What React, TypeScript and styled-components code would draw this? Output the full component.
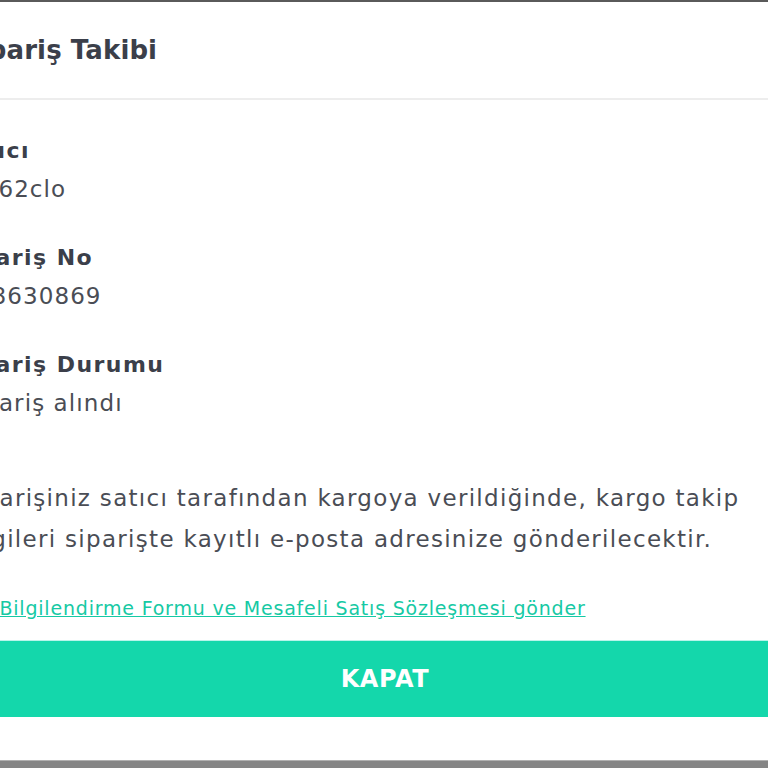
import React from "react";
import styled, { createGlobalStyle } from "styled-components";

const GlobalStyle = createGlobalStyle`
  html, body {
    margin: 0;
    padding: 0;
    overflow: hidden;
    background: #8a8a8a;
  }
  * {
    box-sizing: border-box;
  }
`;

const fields = [
  { label: "Satıcı", value: "lo662clo" },
  { label: "Sipariş No", value: "218630869" },
  { label: "Sipariş Durumu", value: "Sipariş alındı" },
];

const App = () => {
  return (
    <>
      <GlobalStyle />
      <Frame>
        <TopEdge />
        <Modal>
          <Header>
            <Title>Sipariş Takibi</Title>
          </Header>
          <Content>
            {fields.map((f) => (
              <Field key={f.label}>
                <Label>{f.label}</Label>
                <Value>{f.value}</Value>
              </Field>
            ))}
            <Note>
              Siparişiniz satıcı tarafından kargoya verildiğinde, kargo takip
              <br />
              bilgileri siparişte kayıtlı e-posta adresinize gönderilecektir.
            </Note>
            <Link href="#">
              Ön Bilgilendirme Formu ve Mesafeli Satış Sözleşmesi gönder
            </Link>
          </Content>
          <CloseButton>KAPAT</CloseButton>
          <Footer />
        </Modal>
        <BottomBand />
      </Frame>
    </>
  );
};

const Frame = styled.div`
  width: 768px;
  height: 768px;
  display: flex;
  flex-direction: column;
  overflow: hidden;
  font-family: "DejaVu Sans", "Noto Sans", sans-serif;
`;

const TopEdge = styled.div`
  height: 2px;
  background: #5a5a5a;
  flex-shrink: 0;
`;

const Modal = styled.div`
  flex: 1;
  margin-left: -64px;
  background: #ffffff;
  display: flex;
  flex-direction: column;
`;

const Header = styled.div`
  height: 98px;
  display: flex;
  align-items: center;
  padding: 0 24px;
  border-bottom: 2px solid #ededed;
  flex-shrink: 0;
`;

const Title = styled.h2`
  margin: 0;
  font-size: 26px;
  font-weight: 700;
  letter-spacing: 0.1px;
  color: #3b3f4a;
`;

const Content = styled.div`
  padding: 35px 24px 0;
  display: flex;
  flex-direction: column;
`;

const Field = styled.div`
  display: flex;
  flex-direction: column;
  gap: 6px;
  margin-bottom: 37px;
`;

const Label = styled.div`
  margin-left: -8px;
  font-size: 22px;
  font-weight: 700;
  line-height: 32px;
  letter-spacing: 1.45px;
  color: #3b3f4a;
`;

const Value = styled.div`
  font-size: 23px;
  line-height: 32px;
  letter-spacing: 1.1px;
  color: #4a4d55;
`;

const Note = styled.p`
  margin: 22px 0 0;
  font-size: 23px;
  line-height: 41px;
  letter-spacing: 1.3px;
  color: #4a4d55;
  white-space: nowrap;
`;

const Link = styled.a`
  margin: 34px 0 0 4px;
  font-size: 19px;
  font-weight: 400;
  line-height: 28px;
  letter-spacing: 0.8px;
  color: #16c9a4;
  text-decoration: underline;
  white-space: nowrap;
`;

const CloseButton = styled.button`
  margin-top: 18px;
  height: 77px;
  width: 100%;
  border: none;
  border-top: 1px solid #b8f4ea;
  background: #14d7ab;
  color: #ffffff;
  font-family: inherit;
  font-size: 24px;
  font-weight: 700;
  letter-spacing: 0.6px;
  padding-left: 72px;
  cursor: pointer;
  flex-shrink: 0;
`;

const Footer = styled.div`
  flex: 1;
  background: #ffffff;
`;

const BottomBand = styled.div`
  height: 8px;
  background: #858585;
  border-top: 1px solid #b0b0b0;
  flex-shrink: 0;
`;

export default App;
